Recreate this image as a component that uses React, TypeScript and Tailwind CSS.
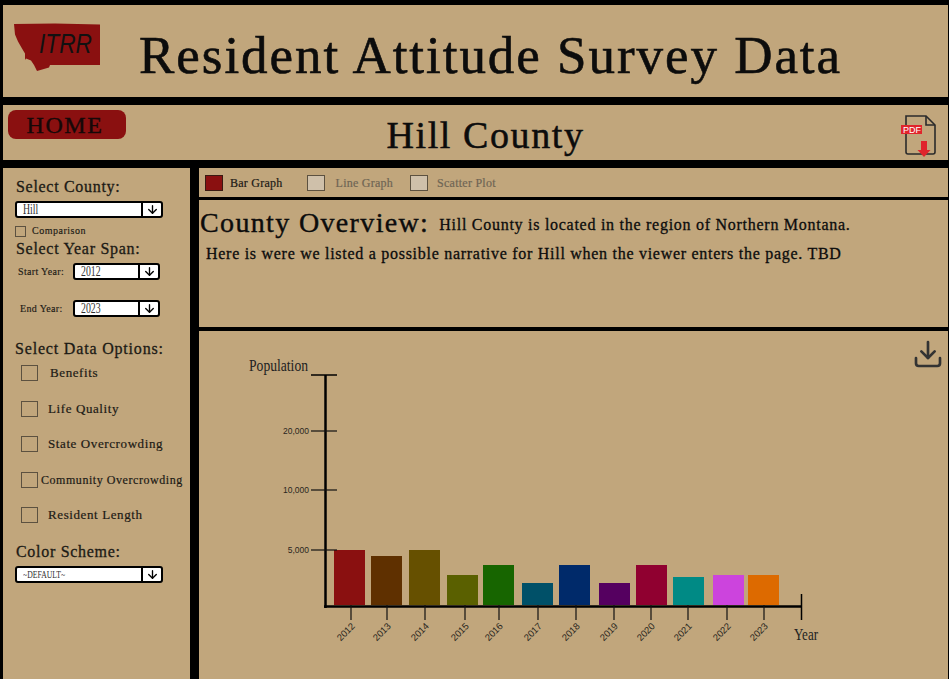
import { ArrowDown, Download } from "lucide-react";

const bars = [
  { year: 2012, x: 334, y: 550, color: "#8a1010", tick: 351 },
  { year: 2013, x: 371, y: 556, color: "#5f3000", tick: 387 },
  { year: 2014, x: 409, y: 550, color: "#665000", tick: 425 },
  { year: 2015, x: 447, y: 575, color: "#5a6000", tick: 465 },
  { year: 2016, x: 483, y: 565, color: "#176500", tick: 499 },
  { year: 2017, x: 522, y: 583, color: "#005068", tick: 538 },
  { year: 2018, x: 559, y: 565, color: "#002a6a", tick: 576 },
  { year: 2019, x: 599, y: 583, color: "#550060", tick: 614 },
  { year: 2020, x: 636, y: 565, color: "#900030", tick: 651 },
  { year: 2021, x: 673, y: 577, color: "#008a85", tick: 688 },
  { year: 2022, x: 713, y: 575, color: "#cc44dd", tick: 727 },
  { year: 2023, x: 748, y: 575, color: "#dd6a00", tick: 764 },
];

const yTicks = [
  { y: 431, label: "20,000" },
  { y: 490, label: "10,000" },
  { y: 550, label: "5,000" },
];

const dataOptions = [
  { label: "Benefits", text: "ml-[12px] text-[13px] tracking-[0.6px]" },
  { label: "Life Quality", text: "ml-[10px] text-[13px] tracking-[0.6px]" },
  { label: "State Overcrowding", text: "ml-[10px] text-[13px] tracking-[0.6px]" },
  { label: "Community Overcrowding", text: "ml-[3px] text-[12px] tracking-[0.55px]" },
  { label: "Resident Length", text: "ml-[10px] text-[13px] tracking-[0.6px]" },
];

function Logo() {
  return (
    <svg viewBox="0 0 90 50" className="h-[50px] w-[90px] overflow-visible" aria-hidden="true">
      <path
        d="M3 2 L44 1.5 L89 2.5 L89 43 L39 43 L38 45.5 L26 49 L23 43 L20 38.5 L15 36.5 L14 38 L14 31.5 L11 26.5 L7 19.5 L4 12.5 Z"
        fill="#8a1010"
      />
      <text
        x="28"
        y="31"
        fontSize="28"
        fontStyle="italic"
        fontFamily="'Liberation Sans', sans-serif"
        textLength="53"
        lengthAdjust="spacingAndGlyphs"
        fill="#111"
      >
        ITRR
      </text>
    </svg>
  );
}

function PdfIcon() {
  return (
    <svg viewBox="0 0 40 44" className="h-[44px] w-[40px]" aria-hidden="true">
      <path
        d="M8 3 H28 L37 12 V39 Q37 41 35 41 H10 Q8 41 8 39 Z"
        fill="none"
        stroke="#2b2b2b"
        strokeWidth="1.6"
      />
      <path d="M28 3 V12 H37" fill="none" stroke="#2b2b2b" strokeWidth="1.6" />
      <rect x="3" y="12" width="21" height="9" fill="#e0242c" />
      <text x="5" y="19.5" fontSize="9" fontFamily="'Liberation Sans', sans-serif" fill="#fff">
        PDF
      </text>
      <path d="M23 28 H29 V37 H32.5 L26 44 L19.5 37 H23 Z" fill="#e0242c" />
    </svg>
  );
}

function Select({
  value,
  className,
  textClass = "text-[14px]",
}: {
  value: string;
  className: string;
  textClass?: string;
}) {
  return (
    <div
      className={`flex h-[17px] items-center rounded-[3px] border-2 border-black bg-white ${className}`}
    >
      <span className="min-w-0 flex-1 pl-[6px] text-[#333] [-webkit-text-stroke:0px]">
        <span className={`block origin-left scale-x-[0.7] whitespace-nowrap leading-[13px] ${textClass}`}>
          {value}
        </span>
      </span>
      <span className="flex h-full w-[20px] items-center justify-center border-l-2 border-black">
        <ArrowDown size={13} strokeWidth={2.5} className="text-black" />
      </span>
    </div>
  );
}

function Sidebar() {
  return (
    <aside className="flex w-[187px] shrink-0 flex-col bg-[#c1a67c] pl-[12px] text-[#1c1a15] [-webkit-text-stroke:0.3px]">
      <h2 className="mt-[10px] ml-[1px] text-[16px] leading-[18px] tracking-[0.7px]">Select County:</h2>
      <Select value="Hill" className="mt-[5px] w-[148px]" />
      <label className="mt-[7px] flex items-center">
        <span className="h-[11px] w-[11px] border border-[#5c5140]" />
        <span className="ml-[6px] text-[10px] leading-[12px] tracking-[0.5px] [-webkit-text-stroke:0.15px]">
          Comparison
        </span>
      </label>
      <h2 className="mt-[3px] ml-[1px] text-[16px] leading-[18px] tracking-[0.7px]">Select Year Span:</h2>
      <div className="mt-[5px] ml-[3px] flex items-center">
        <span className="w-[55px] text-[10px] leading-[12px] tracking-[0.35px] [-webkit-text-stroke:0.15px]">
          Start Year:
        </span>
        <Select value="2012" className="w-[87px]" />
      </div>
      <div className="mt-[20px] ml-[5px] flex items-center">
        <span className="w-[53px] text-[10px] leading-[12px] tracking-[0.35px] [-webkit-text-stroke:0.15px]">
          End Year:
        </span>
        <Select value="2023" className="w-[87px]" />
      </div>
      <h2 className="mt-[23px] text-[16px] leading-[18px] tracking-[0.82px]">Select Data Options:</h2>
      <div className="mt-[7px] ml-[6px] flex flex-col gap-[19.5px]">
        {dataOptions.map((option) => (
          <label key={option.label} className="flex items-center">
            <span className="h-[16px] w-[17px] shrink-0 border border-[#5c5140]" />
            <span className={`${option.text} whitespace-nowrap leading-[16px] [-webkit-text-stroke:0.2px]`}>
              {option.label}
            </span>
          </label>
        ))}
      </div>
      <h2 className="mt-[20px] ml-[1px] text-[16px] leading-[18px] tracking-[0.7px]">Color Scheme:</h2>
      <Select value="~DEFAULT~" className="mt-[5px] w-[148px]" textClass="text-[11px]" />
    </aside>
  );
}

function GraphTab({ label, active, labelClass }: { label: string; active?: boolean; labelClass: string }) {
  return (
    <div className="flex items-center">
      <span
        className={`h-[16px] w-[18px] border ${active ? "border-[#3a1a12] bg-[#8a1010]" : "border-[#5c5140] bg-[#cfc0aa]"}`}
      />
      <span
        className={`${labelClass} text-[12px] leading-[14px] tracking-[0.25px] ${active ? "text-[#1c1a15]" : "text-[#6f6554]"}`}
      >
        {label}
      </span>
    </div>
  );
}

function Chart() {
  return (
    <svg viewBox="199 331 749 348" className="h-full w-full" aria-label="Population by year">
      <text
        x="249"
        y="371"
        fontSize="17"
        fontFamily="'Liberation Serif', serif"
        fill="#222"
        textLength="59"
        lengthAdjust="spacingAndGlyphs"
      >
        Population
      </text>
      {bars.map((bar) => (
        <rect key={bar.year} x={bar.x} y={bar.y} width="31" height={605 - bar.y} fill={bar.color} />
      ))}
      <path d="M325.5 375 V608" stroke="#000" strokeWidth="2.5" />
      <path d="M324 606.5 H802" stroke="#000" strokeWidth="2.5" />
      <path d="M801.5 594 V620" stroke="#000" strokeWidth="1.5" />
      <path d="M311 375 H337" stroke="#000" strokeWidth="1.5" />
      {yTicks.map((tick) => (
        <g key={tick.y}>
          <path d={`M311 ${tick.y} H337`} stroke="#111" strokeWidth="1.2" />
          <text
            x="309"
            y={tick.y + 3}
            textAnchor="end"
            fontSize="8.5"
            fontFamily="'Liberation Sans', sans-serif"
            fill="#2a261e"
          >
            {tick.label}
          </text>
        </g>
      ))}
      {bars.map((bar) => (
        <g key={bar.year}>
          <path d={`M${bar.tick} 605 V620`} stroke="#111" strokeWidth="1.2" />
          <text
            x={bar.tick - 5}
            y={635}
            textAnchor="middle"
            fontSize="9.5"
            fontFamily="'Liberation Sans', sans-serif"
            fill="#2a261e"
            transform={`rotate(-45 ${bar.tick - 5} 632)`}
          >
            {bar.year}
          </text>
        </g>
      ))}
      <text
        x="794"
        y="640"
        fontSize="17"
        fontFamily="'Liberation Serif', serif"
        fill="#222"
        textLength="24"
        lengthAdjust="spacingAndGlyphs"
      >
        Year
      </text>
    </svg>
  );
}

export default function App() {
  return (
    <div className="flex h-[679px] w-[949px] flex-col overflow-hidden bg-black pt-[5px] pr-[1px] pl-[3px] font-['Liberation_Serif',serif] text-[#0c0c0c]">
      <header className="flex h-[92px] shrink-0 items-start bg-[#c1a67c]">
        <div className="mt-[17px] ml-[8px]">
          <Logo />
        </div>
        <h1 className="mt-[22px] ml-[38px] text-[53px] leading-[56px] tracking-[1.96px] whitespace-nowrap [-webkit-text-stroke:0.6px]">
          Resident Attitude Survey Data
        </h1>
      </header>

      <div className="relative mt-[8px] flex h-[55px] shrink-0 items-start justify-center bg-[#c1a67c]">
        <a className="absolute top-[5px] left-[5px] flex h-[29px] w-[118px] items-center justify-center rounded-[8px] bg-[#8a1010] pr-[4px] text-[24px] tracking-[1.6px] text-[#160808] [-webkit-text-stroke:0.4px]">
          HOME
        </a>
        <h2 className="mt-[8px] mr-[-20px] text-[38px] leading-[44px] tracking-[1.6px] [-webkit-text-stroke:0.5px]">
          Hill County
        </h2>
        <div className="absolute top-[8px] right-[10px]">
          <PdfIcon />
        </div>
      </div>

      <div className="mt-[8px] flex min-h-0 flex-1 gap-[9px]">
        <Sidebar />
        <main className="flex min-w-0 flex-1 flex-col gap-[3px]">
          <div className="flex h-[29px] shrink-0 items-center bg-[#c1a67c] pl-[6px] [-webkit-text-stroke:0.2px]">
            <GraphTab label="Bar Graph" active labelClass="ml-[7px]" />
            <div className="ml-[24px]">
              <GraphTab label="Line Graph" labelClass="ml-[11px]" />
            </div>
            <div className="ml-[17px]">
              <GraphTab label="Scatter Plot" labelClass="ml-[9px]" />
            </div>
          </div>
          <section className="h-[127px] shrink-0 bg-[#c1a67c] pt-[8px] pl-[1px] [-webkit-text-stroke:0.3px]">
            <div className="flex items-start">
              <h3 className="text-[28px] leading-[30px] tracking-[1.35px] whitespace-nowrap [-webkit-text-stroke:0.4px]">
                County Overview:
              </h3>
              <p className="mt-[8px] ml-[10px] text-[16px] leading-[18px] tracking-[0.73px] whitespace-nowrap">
                Hill County is located in the region of Northern Montana.
              </p>
            </div>
            <p className="mt-[7px] ml-[6px] text-[16px] leading-[18px] tracking-[0.72px] whitespace-nowrap">
              Here is were we listed a possible narrative for Hill when the viewer enters the page. TBD
            </p>
          </section>
          <section className="relative mt-[1px] min-h-0 flex-1 bg-[#c1a67c]">
            <Chart />
            <Download size={32} strokeWidth={2} className="absolute top-[7px] right-[4px] text-[#333]" />
          </section>
        </main>
      </div>
    </div>
  );
}
